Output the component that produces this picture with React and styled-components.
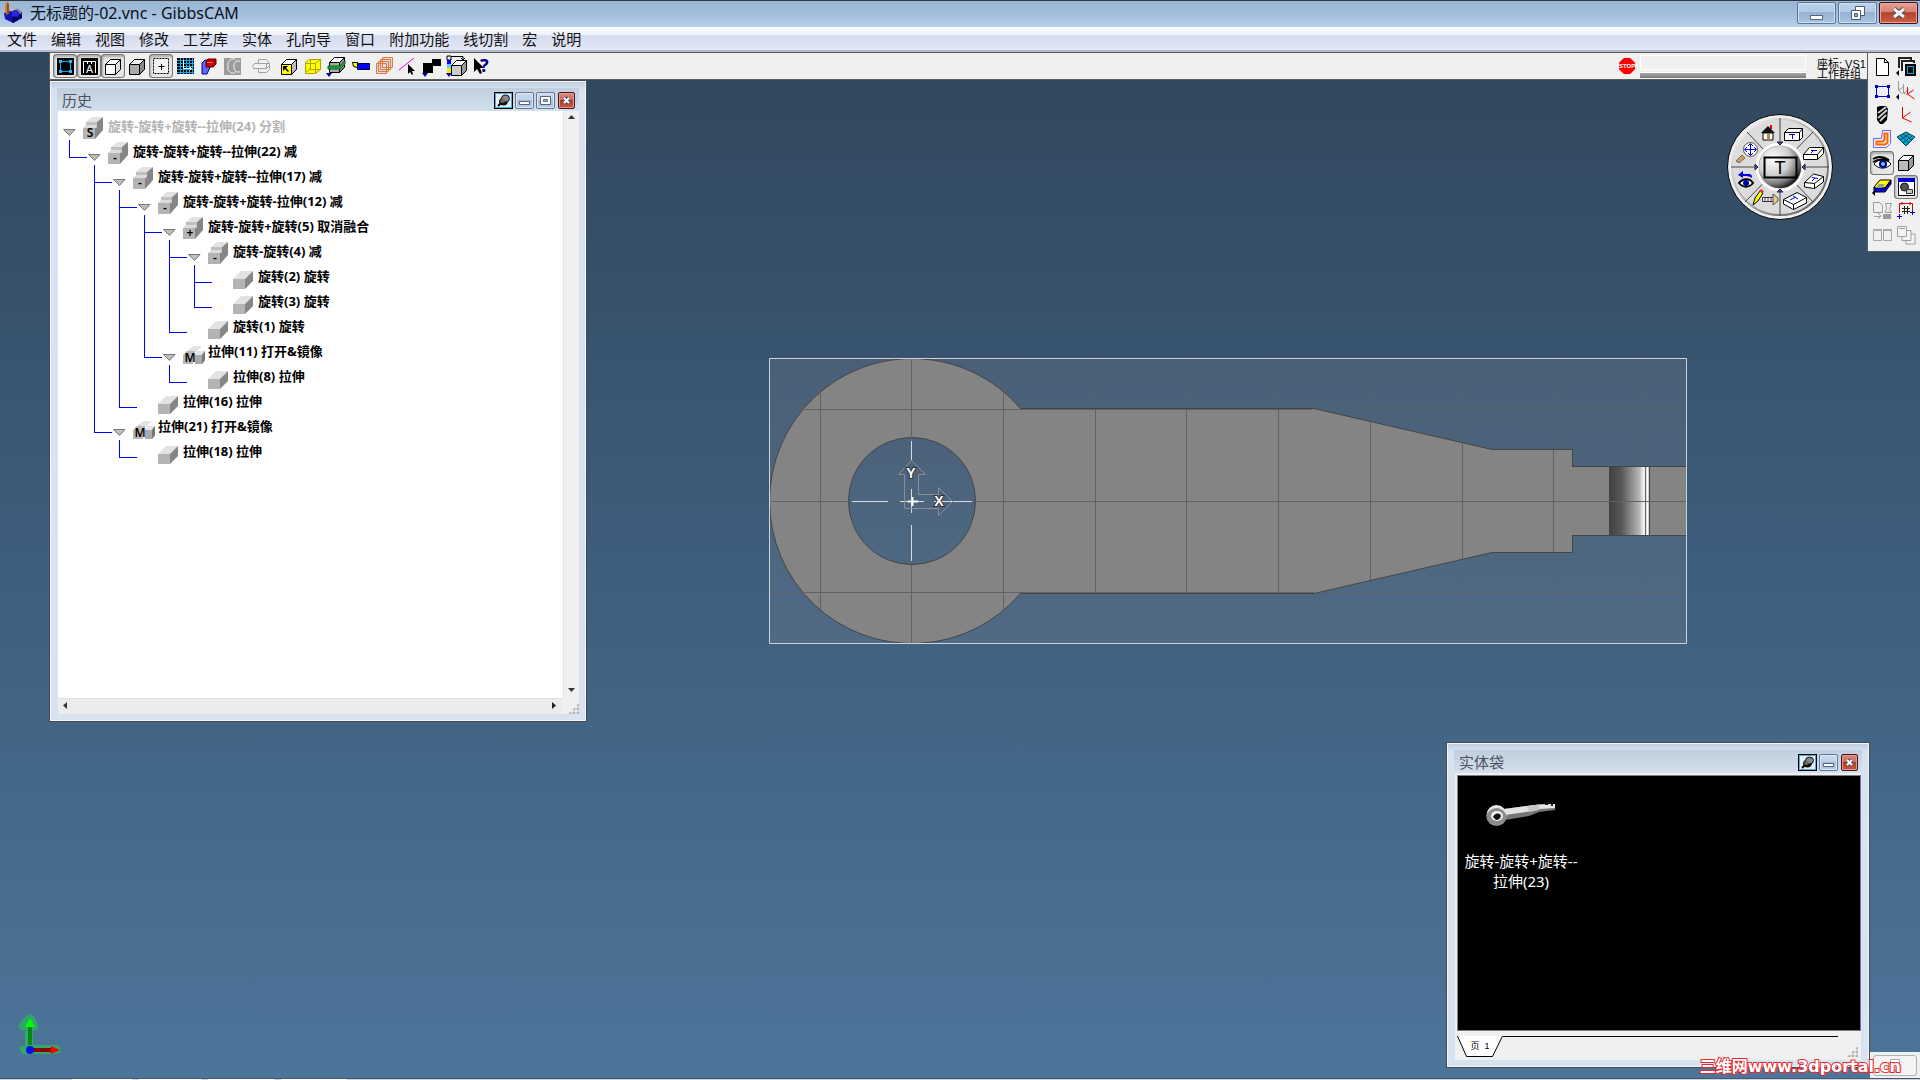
import React, { useState } from "react";
import styled, { createGlobalStyle } from "styled-components";

const menus = ["文件", "编辑", "视图", "修改", "工艺库", "实体", "孔向导", "窗口", "附加功能", "线切割", "宏", "说明"];

const history = {
  label: "旋转-旋转+旋转--拉伸(24) 分割", mark: "S", faded: true,
  children: [{
    label: "旋转-旋转+旋转--拉伸(22) 减", mark: "-",
    children: [
      {
        label: "旋转-旋转+旋转--拉伸(17) 减", mark: "-",
        children: [
          {
            label: "旋转-旋转+旋转-拉伸(12) 减", mark: "-",
            children: [
              {
                label: "旋转-旋转+旋转(5) 取消融合", mark: "+",
                children: [
                  {
                    label: "旋转-旋转(4) 减", mark: "-",
                    children: [{ label: "旋转(2) 旋转" }, { label: "旋转(3) 旋转" }],
                  },
                  { label: "旋转(1) 旋转" },
                ],
              },
              { label: "拉伸(11) 打开&镜像", mark: "M", children: [{ label: "拉伸(8) 拉伸" }] },
            ],
          },
          { label: "拉伸(16) 拉伸" },
        ],
      },
      { label: "拉伸(21) 打开&镜像", mark: "M", children: [{ label: "拉伸(18) 拉伸" }] },
    ],
  }],
};

const Cube = ({ x = 5, y = 5, front = "#fff", top = "#fff", side = "#ddd", line = "#000" }) => (
  <g stroke={line} fill={front} transform={`translate(${x} ${y})`}>
    <path d="M.5 5.5L5.5 .5H15.5L10.5 5.5Z" fill={top} />
    <path d="M10.5 5.5L15.5 .5V10.5L10.5 15.5Z" fill={side} />
    <path d="M.5 5.5H10.5V15.5H.5Z" />
  </g>
);

const DownMark = ({ x = 2 }) => <path d={`M${x} 19h6l-3 4z`} fill="#00a" />;
const LeftMark = () => <path d="M5 15v6l-3-3z" fill="#000" />;

const tools = [
  { name: "workgroup", on: true, art: <>
    <path d="M4 4h17v17H4z" /><path d="M7.500 7.500h10v10h-10z" fill="none" stroke="#00aeef" />
    <path d="M6 6h3v3H6zM16 6h3v3h-3zM6 16h3v3H6zM16 16h3v3h-3z" fill="#28b4ff" /></> },
  { name: "annotation", on: true, art: <>
    <path d="M4 4h17v17H4z" /><path d="M6.500 19V7.500h12V19M10.500 7v3M14.500 7v3" fill="none" stroke="#fff" />
    <text x="12.500" y="19" fontSize="11" fill="#fff" textAnchor="middle">A</text></> },
  { name: "solids", on: true, art: <Cube x={4} y={5} /> },
  { name: "sheets", art: <Cube x={4} y={5} front="#aaa" top="#f4f4f4" side="#888" /> },
  { name: "origin", on: true, art: <>
    <path d="M4.500 4.500h15v15h-15z" fill="#f4f4f4" stroke="#000" strokeDasharray="2 1" />
    <path d="M12.500 10v6M9.500 12.500h6" stroke="#000" /></> },
  { name: "grid", art: <>
    <path d="M4 4h17v16H4z" fill="#000" />
    <path d="M7.500 4v16M10.500 4v16M13.500 4v16M16.500 4v16M19.500 4v16M4 6.500h17M4 9.500h17M4 12.500h17M4 15.500h17M4 18.500h17" stroke="#19a6e8" />
    <path d="M10.500 6v8.500h8M16.500 12.500l2 2-2 2" fill="none" stroke="#fff" /></> },
  { name: "render", art: <>
    <path d="M5 9l3-3h5v7l-3 7H5z" fill="#6464ff" stroke="#00008c" />
    <path d="M9 8l2-3h8v5l-3 3H9z" fill="#c80000" stroke="#500" /><path d="M10 8.500h6" stroke="#f66" /></> },
  { name: "tool path", art: <>
    <path d="M3 4h17v17H3z" fill="#9c9c9c" />
    <path d="M19 7h-4l-2 3v5l2 3h4M14 5h-4l-3 4v7l3 3h4" fill="none" stroke="#eee" /></> },
  { name: "revolve", gap: true, art: <path d="M9.500 5.500h8l3 4v6l-3 3h-8v-4h-5l-1-2 2-3h4zM9.500 9.500h8v5h-8M17.500 9.500l3 0M17.500 14.500l3-3" fill="none" stroke="#a0a0a0" /> },
  { name: "select face", gap: true, art: <>
    <Cube x={4} y={5} front="#ff0" top="#fff" side="#bbb" />
    <path d="M6 12h5l-2 2 3 3-1 1-3-3-2 2z" /></> },
  { name: "wireframe", art: <>
    <path d="M4 9l5-4h11v10l-5 5H4z" fill="#ff0" />
    <path d="M4.500 9.500h10v10h-10zM9.500 5.500h10v10h-10zM4 9l5-4M15 9l5-4M15 19l5-4M4 19l5-4" fill="none" stroke="#aaa200" /></> },
  { name: "section", art: <>
    <Cube x={4} y={3} front="#aaa" top="#fff" side="#888" />
    <path d="M3 12h12l5-5v3l-5 5H3z" fill="#28a428" stroke="#063" /><DownMark x={1} /></> },
  { name: "tag", art: <>
    <path d="M3.500 8.500h5v5l-4-1z" fill="#ff0" stroke="#000" /><path d="M8.500 9.500h12v6h-12z" fill="#00f" stroke="#004" /></> },
  { name: "layers", art: <>
    <path d="M3 9l6-5h10v11l-5 5H3z" fill="#ddd" />
    <path d="M3.500 9.500h10v10h-10zM5.500 7.500h10v10h-10zM7.500 5.500h10v10h-10zM9.500 3.500h10v10h-10z" fill="none" stroke="#e07840" /></> },
  { name: "line snap", art: <>
    <path d="M2 16L17 4" stroke="#f0f" /><path d="M11 10v10l2-2 2 3 1-1-1-3h3z" /></> },
  { name: "blocks", art: <><path d="M2 9h10v10H2z" /><path d="M11 5h9v7h-9z" /><DownMark x={1} /></> },
  { name: "profile", art: <>
    <path d="M2 2h4v4H2z" fill="#eee" stroke="#000" /><path d="M2 6h4v4H2z" fill="#00f" /><path d="M2 10h4v4H2z" fill="#6cf" />
    <path d="M2 14h4v5H2z" fill="#ee0" /><path d="M6 2.500h12v3M16 4l2 2 2-2" fill="none" stroke="#000" />
    <Cube x={6} y={6} front="#ccc" top="#fff" side="#999" /><DownMark x={1} /></> },
  { name: "help", art: <>
    <path d="M5 4v14l3-3 3 5 2-1-2-5h4z" /><text x="11" y="18" fontSize="18" fontWeight="bold" fill="#00008b">?</text></> },
];

const palette = [
  { name: "new", art: <path d="M6.500 3.500h8l4 4v13h-12zM14.500 3.500v4h4" fill="#fff" stroke="#000" /> },
  { name: "workgroups", art: <>
    <path d="M5 13V3h12v2M8 16V6h12v2" fill="none" stroke="#222" strokeWidth="2" /><path d="M11 9h11v12H11z" />
    <path d="M13.500 11.500h6v7h-6z" fill="none" stroke="#00b4f0" /><LeftMark /></> },
  { name: "geometry", art: <>
    <path d="M6.500 7.500h12v10h-12z" fill="none" stroke="#00f" />
    <path d="M5 6h3v3H5zM17 6h3v3h-3zM5 16h3v3H5zM17 16h3v3h-3z" fill="#00c" /></> },
  { name: "coordinates", art: <>
    <path d="M4.500 2v9l5-3M4.500 11l4 4M9.500 5v9l5-3M9.500 14l4 2" fill="none" stroke="#999" />
    <path d="M13.500 8v7l6-4M13.500 15l7 5" fill="none" stroke="#e00" /><LeftMark /></> },
  { name: "tools", art: <>
    <path d="M7 4l3-1h6l2 3-1 11-4 4h-3l-3-4z" /><path d="M8 10l8-6M8 15l9-8M10 18l6-6" stroke="#ccc" strokeWidth="2" /></> },
  { name: "cs", art: <path d="M8.500 4v11l8-6M8.500 15l9 4" fill="none" stroke="#e00" /> },
  { name: "machining", art: <>
    <path d="M12.500 3.500h8v13l-4 4h-13v-9h8z" fill="none" stroke="#66f" />
    <path d="M14.500 6.500h3v9l-2 2h-9v-3h6l2-2z" fill="#ffe0c0" stroke="#f60" strokeWidth="2" /></> },
  { name: "surface", art: <>
    <path d="M3 10l9-5 9 5-9 9z" fill="#00a8d8" stroke="#045" />
    <path d="M6 8l9 8M9 7l9 6M6 13l9-6M9 16l9-7" stroke="#045" /></> },
  { name: "visibility", on: true, art: <>
    <path d="M4 13c4-5 12-6 17 0-4 5-12 6-17 0z" fill="#fff" stroke="#000" strokeWidth="1" />
    <circle cx="13" cy="13" r="4" fill="#00008c" /><circle cx="13" cy="13" r="2" fill="#6cf" />
    <path d="M3 8c5-3 10-3 16 1M3 11c5-3 11-3 16-1" fill="none" stroke="#000" strokeWidth="2" /></> },
  { name: "solid", art: <Cube x={4} y={4} front="#bbb" top="#fff" side="#999" /> },
  { name: "cut", art: <>
    <path d="M4 12l6-7h11l-6 8H4z" fill="#ff0" stroke="#000" /><path d="M4 13h11l6-8v4l-6 8H4z" fill="#00d" stroke="#000" />
    <path d="M9 9h6l-3 4H6z" fill="#999" /><LeftMark /></> },
  { name: "render view", on: true, art: <>
    <path d="M4.500 4.500h16v16h-16z" fill="#fff" stroke="#000" /><path d="M4 3h17v4H4z" fill="#00c" />
    <circle cx="10.500" cy="12" r="4" fill="#555" stroke="#111" /><path d="M12.500 14.500h6v4h-6z" fill="#ccc" stroke="#333" /></> },
  { name: "post", art: <>
    <path d="M3.500 3.500h6l3 3v7h-9zM15.500 4.500h6l-2 6 2 3h-6l1-4zM4 17.500h7M8 14l3 3-3 3" fill="none" stroke="#9a9a9a" />
    <path d="M13 15h8v5h-8z" fill="#999" /></> },
  { name: "dimension", art: <>
    <path d="M5.500 14V4.500h13V12M8 3v3M16 3v3" fill="none" stroke="#d00" />
    <path d="M8 9.500h8M8 12.500h8M10.500 7v8M13.500 7v8" stroke="#222" /><path d="M3 17.500h5M5.500 15v5M16 13.500h5M18.500 11v5" stroke="#00c" /></> },
  { name: "split", art: <path d="M3.500 7.500h8v10h-8zM13.500 7.500h8v10h-8zM3 6.500h9M13 6.500h9" fill="none" stroke="#a8a8a8" /> },
  { name: "cascade", art: <path d="M3.500 3.500h9v10h-9zM8 13.500v4h9v-10h-4M12 17v4h9v-10h-4M5 5.500h6" fill="#f4f4f4" stroke="#a0a0a0" /> },
];

const Icon = ({ size = 24, children }) => (
  <svg width={size} height={size} viewBox="0 0 24 24" aria-hidden="true">{children}</svg>
);

const SolidIcon = ({ mark }) => {
  const block = (x, y) => (
    <g transform={`translate(${x} ${y})`}>
      <path d="M0 8L8 0H20L12 8Z" fill="#e2e2e2" />
      <path d="M12 8L20 0V10L12 18Z" fill="#868686" />
      <path d="M0 8H12V18H0Z" fill="#b4b4b4" />
    </g>
  );
  return (
    <svg width="22" height="22" viewBox="0 0 22 22" aria-hidden="true">
      {!mark && block(0, 4)}
      {mark && mark !== "M" && (
        <>
          <path d="M3 5L9 0H20L14 5Z" fill="#e2e2e2" />
          <path d="M3 5H14V11H3Z" fill="#c0c0c0" />
          <path d="M14 5L20 0V13L12 22V11H14Z" fill="#868686" />
          <path d="M0 11L3 8H14L12 11Z" fill="#dcdcdc" />
          <path d="M0 11H12V22H0Z" fill="#b4b4b4" />
        </>
      )}
      {mark === "M" && (
        <>
          <path d="M5 8L11 4H19L14 9H5Z" fill="#e2e2e2" />
          <path d="M0 13L4 9H13L10 13V22H0Z" fill="#b8b8b8" />
          <path d="M12 13L15 9H22V18L19 22H12Z" fill="#aaa" />
          <path d="M12 13L15 9H22L19 13Z" fill="#e4e4e4" />
          <path d="M19 13L22 9V18L19 22Z" fill="#777" />
        </>
      )}
      {mark && <MarkText x="7" y="20">{mark}</MarkText>}
    </svg>
  );
};

const TreeNode = ({ node }) => {
  const [open, setOpen] = useState(true);
  return (
    <Branch>
      <NodeRow>
        <Toggle aria-label="toggle" disabled={!node.children} onClick={() => setOpen(!open)}>
          {node.children && (
            <svg width="13" height="7" viewBox="0 0 13 7" aria-hidden="true">
              <path d="M.5 .5H12L6.500 6.500Z" fill="#bdbdbd" stroke="#777" />
            </svg>
          )}
        </Toggle>
        <SolidIcon mark={node.mark} />
        <NodeLabel $faded={node.faded}>{node.label}</NodeLabel>
      </NodeRow>
      {open && node.children && (
        <SubTree>
          {node.children.map((child) => <TreeNode key={child.label} node={child} />)}
        </SubTree>
      )}
    </Branch>
  );
};

const PanelButtons = ({ max }) => (
  <Controls>
    <PanelButton $pin aria-label="pin">
      <svg width="15" height="13" viewBox="0 0 15 13">
        <path d="M2 12l3-3" stroke="#000" strokeWidth="2" />
        <ellipse cx="7.500" cy="7.500" rx="4.500" ry="4" fill="#111" />
        <ellipse cx="9.500" cy="4.500" rx="4" ry="3.500" fill="#888" stroke="#111" />
        <ellipse cx="6.500" cy="7" rx="2.500" ry="2" fill="#666" />
      </svg>
    </PanelButton>
    <PanelButton aria-label="minimize">
      <svg width="13" height="11" viewBox="0 0 13 11"><path d="M1.500 6.500h10v3h-10z" fill="#fff" stroke="#55657c" /></svg>
    </PanelButton>
    {max && (
      <PanelButton aria-label="maximize">
        <svg width="13" height="11" viewBox="0 0 13 11"><path d="M1.500 1.500h10v8h-10z" fill="#fff" stroke="#55657c" /><path d="M4.500 4.500h4v2h-4z" fill="#a5c4e8" stroke="#55657c" /></svg>
      </PanelButton>
    )}
    <PanelButton $close aria-label="close">
      <svg width="9" height="9" viewBox="0 0 9 9"><path d="M2 2l5 5M7 2l-5 5" stroke="#4a5570" strokeWidth="4" /><path d="M2 2l5 5M7 2l-5 5" stroke="#fff" strokeWidth="2" /></svg>
    </PanelButton>
  </Controls>
);

const Part = () => (
  <PartView viewBox="768 356 920 290" aria-hidden="true">
    <defs>
      <linearGradient id="bore">
        <stop offset="0" stopColor="#404040" />
        <stop offset=".3" stopColor="#585858" />
        <stop offset=".55" stopColor="#8c8c8c" />
        <stop offset=".75" stopColor="#b8b8b8" />
        <stop offset=".86" stopColor="#f4f4f4" />
        <stop offset="1" stopColor="#c8c8c8" />
      </linearGradient>
    </defs>
    <path d="M769 358h918v286h-918z" fill="#b0a0a0" fillOpacity=".15" />
    <g stroke="#5c6368">
      <path d="M820.500 359v284M911.500 359v284M1003.500 359v284M1095.500 359v284M1187.500 359v284M1278.500 359v284M1370.500 359v284M1462.500 359v284M1553.500 359v284M1645.500 359v284" strokeOpacity=".4" />
      <path d="M769 409.500h917M769 501.500h917M769 592.500h917" strokeOpacity=".7" />
    </g>
    <path
      d="M1020.500 408.500H1314L1492 449.500H1572.500V466.500H1686.500V535.500H1572.500V552.500H1492L1314 593.500H1020.500A142.500 142.500 0 1 1 1020.500 408.500ZM912 437.500A63.500 63.500 0 1 0 912 564.500A63.500 63.500 0 1 0 912 437.500Z"
      fill="#848484" stroke="#454545" fillRule="evenodd"
    />
    <path d="M1609.500 466.500h40v69h-40z" fill="url(#bore)" stroke="#454545" />
    <path d="M1647.500 467v68" stroke="#fff" />
    <g stroke="#626262">
      <path d="M820.500 393V609M911.500 359v79M911.500 565v78M1003.500 392V609M1095.500 409v184M1186.500 409v184M1278.500 409v184M1370.500 422v158M1462.500 443v116M1553.500 450v102M1645.500 467v68" />
      <path d="M802 409.500h510M770 501.500h79M975 501.500h711M802 592.500h512" />
    </g>
    <path d="M769.500 358.500h917v285h-917z" fill="none" stroke="#cfd3d6" />
    <path d="M911.500 441v19M911.500 489v24M911.500 525v36M852 501.500h36M900 501.500h24M934 501.500h38" stroke="#d8dce0" />
    <path d="M904.500 508.500V474.500H898.500L911.500 460.500L925.500 474.500H918.500V494.500H938.500V487.500L952.500 501.500L938.500 515.500V508.500Z" fill="none" stroke="#8d8d8d" />
    <path d="M912.500 497v9M908 501.500h10" stroke="#fff" strokeWidth="2" />
    <AxisText x="911" y="478">Y</AxisText>
    <AxisText x="939" y="506">X</AxisText>
  </PartView>
);

const TBox = ({ x, y, tilt }) => (
  <g transform={`translate(${x} ${y})`} fill="#fff" stroke="#000">
    {tilt === 0 && <><path d="M.500 4.500L4.500 .500H18.500V9.500L15.500 12.500H.500Z" /><path d="M.500 4.500H15.500V12.500M15.500 4.500L18.500 .500" /><path d="M5 6.500h6M8.500 6v5" stroke="#00f" /></>}
    {tilt === 1 && <><path d="M.500 7.500L6.500 .500H20.500V6.500L14.500 12.500H.500Z" /><path d="M.500 7.500H14.500V12.500M14.500 7.500L20.500 .500" /><path d="M8 3.500h6M11 3l-3 3" stroke="#00f" /></>}
    {tilt === 2 && <><path d="M.500 8.500L9.500 0L19.500 2.500V8L10.500 14.500L.500 13Z" /><path d="M.500 8.500L10.500 9.500V14.500M10.500 9.500L19.500 2.500" /><path d="M8 3.500l6 1M11 4l-3 3" stroke="#00f" /></>}
    {tilt === 3 && <><path d="M.500 7.500L14 .500L23.500 5.500V11L10.500 17.500L.500 12Z" /><path d="M.500 7.500L10.500 12.500V17.500M10.500 12.500L23.500 5.500" /><path d="M10 4l5 3M13 5l-6 3" stroke="#00f" /></>}
  </g>
);

const ViewWheel = () => (
  <Wheel viewBox="0 0 106 106" aria-hidden="true">
    <defs>
      <radialGradient id="ball" cx=".33" cy=".3" r=".78">
        <stop offset="0" stopColor="#fff" />
        <stop offset=".5" stopColor="#d0d0d0" />
        <stop offset=".78" stopColor="#777" />
        <stop offset="1" stopColor="#000" />
      </radialGradient>
      <linearGradient id="rim" x1="0" y1="0" x2="1" y2="1">
        <stop offset="0" stopColor="#fff" />
        <stop offset="1" stopColor="#555" />
      </linearGradient>
    </defs>
    <circle cx="53" cy="53" r="52.500" fill="#eee" stroke="#000" />
    <circle cx="53" cy="53" r="48" fill="#dcdcdc" stroke="url(#rim)" strokeWidth="2" />
    <path d="M53 4v98M4 53h98M20 18l66 70M86 18L18 88" stroke="#444" strokeWidth="1" />
    <circle cx="53" cy="53" r="25" fill="#dcdcdc" />
    <circle cx="53" cy="53" r="23" fill="#999" stroke="#fff" strokeWidth="3" />
    <circle cx="53" cy="53" r="21" fill="url(#ball)" />
    <g fill="#4848b8" stroke="#224">
      <path d="M50 28h6l-3 3zM50 78h6l-3-3zM28 50v6l3-3zM78 50v6l-3-3z" />
    </g>
    <path d="M37.500 43.500h32v20h-32z" fill="none" stroke="#000" strokeWidth="2" />
    <text x="53" y="60" fontFamily="Liberation Sans, sans-serif" fontSize="18" textAnchor="middle">T</text>
    <path d="M34 19l7-7 7 7z" fill="#111" /><path d="M36 19h10v7H36z" fill="#fff" stroke="#000" /><path d="M40 20h3v6h-3z" fill="#b08850" /><path d="M43 11h2v4h-2z" fill="#e00" />
    <TBox x={57} y={14} tilt={0} />
    <TBox x={76} y={33} tilt={1} />
    <TBox x={77} y={60} tilt={2} />
    <TBox x={56} y={78} tilt={3} />
    <circle cx="23.500" cy="35.500" r="7" fill="#fff" stroke="#555" />
    <path d="M23.500 30v11M18 35.500h11M21 32l2.500-2.500 2.500 2.500M21 39l2.500 2.500 2.500-2.500M20 33l-2.500 2.500 2.500 2.500M27 33l2.500 2.500-2.500 2.500" fill="none" stroke="#00d" />
    <path d="M9 47l6-6 3 3-6 5z" fill="#c8a060" stroke="#765" />
    <path d="M11 61l5-4v3h5c4 0 4 2 4 4-3-2-5-2-9-2v2z" fill="#00d" />
    <path d="M12 69c4-5 11-5 14 0-4 5-10 5-14 0z" fill="#fff" stroke="#000" strokeWidth="2" /><circle cx="19" cy="69" r="3" fill="#00a" />
    <path d="M26 91l2-7 5-7 3 2-5 8z" fill="#ff0" stroke="#000" /><path d="M32 77l2-2 3 2-2 2z" fill="#e33" />
    <path d="M35.500 83.500h11v4h-11zM38 83v4M41 83v4M44 83v4" fill="#fff" stroke="#333" /><path d="M46 80v11l5-4v-3z" fill="#e8c890" stroke="#555" />
  </Wheel>
);

const App = () => (
  <Page>
    <GlobalStyle />
    <TitleBar>
      <svg width="20" height="24" viewBox="0 0 20 24" aria-hidden="true">
        <path d="M1 12l4-2 14 1v6l-9 5-8-4z" fill="#1414b4" /><path d="M9 16l10-4v5l-9 5z" fill="#00006e" />
        <path d="M9 12c1-5 7-6 9 0l-4 4-5-1z" fill="#2828dc" /><path d="M8 10c3-3 8-2 10 3" fill="none" stroke="#e6c83c" strokeWidth="1" />
        <path d="M2 3l2-2 2 2v9l-2 2-2-3z" fill="#dc7d28" /><path d="M4 1l2 2v9l-2 2z" fill="#96501e" />
      </svg>
      <AppTitle>无标题的-02.vnc - GibbsCAM</AppTitle>
      <CaptionButton aria-label="minimize window">
        <svg width="15" height="16" viewBox="0 0 15 16"><path d="M1.500 10.500h12v4h-12z" fill="#fff" stroke="#55657c" /></svg>
      </CaptionButton>
      <CaptionButton aria-label="restore window">
        <svg width="16" height="16" viewBox="0 0 16 16"><path d="M5.500 1.500h9v9h-9z" fill="#fff" stroke="#4f5c70" /><path d="M1.500 5.500h9v9h-9z" fill="#fff" stroke="#4f5c70" /><path d="M4.500 8.500h3v3h-3z" fill="#8fb0d8" stroke="#4f5c70" /></svg>
      </CaptionButton>
      <CaptionButton $close aria-label="close window">
        <svg width="14" height="14" viewBox="0 0 14 14"><path d="M2 3l10 8M12 3L2 11" stroke="#4a4a5c" strokeWidth="5" /><path d="M2 3l10 8M12 3L2 11" stroke="#f4f4f4" strokeWidth="3" /></svg>
      </CaptionButton>
    </TitleBar>
    <MenuBar>
      {menus.map((menu) => <MenuItem key={menu}>{menu}</MenuItem>)}
    </MenuBar>

    <Workspace>
      <Main>
        <Toolbar>
          {tools.map((tool) => (
            <ToolButton key={tool.name} aria-label={tool.name} $on={tool.on} $gap={tool.gap}>
              <Icon>{tool.art}</Icon>
            </ToolButton>
          ))}
          <Spacer />
          <StopButton aria-label="stop">STOP</StopButton>
          <Progress>
            <ProgressText />
            <ProgressTrack />
          </Progress>
          <Coords>
            <div>座标: VS1</div>
            <div>工作群组</div>
          </Coords>
        </Toolbar>
      </Main>
      <Palette>
        {palette.map((tool) => (
          <ToolButton key={tool.name} aria-label={tool.name} $on={tool.on}>
            <Icon>{tool.art}</Icon>
          </ToolButton>
        ))}
      </Palette>

      <Part />
      <ViewWheel />

      <HistoryWindow>
        <PanelHead>
          <PanelTitle>历史</PanelTitle>
          <PanelButtons max />
        </PanelHead>
        <HistoryBody>
          <Tree>
            <TreeNode node={history} />
          </Tree>
          <ScrollColumn>
            <ScrollArrow aria-label="scroll up"><svg width="7" height="4" viewBox="0 0 7 4"><path d="M0 4L3.500 0L7 4Z" fill="#333" /></svg></ScrollArrow>
            <ScrollArrow aria-label="scroll down"><svg width="7" height="4" viewBox="0 0 7 4"><path d="M0 0L3.500 4L7 0Z" fill="#333" /></svg></ScrollArrow>
          </ScrollColumn>
          <ScrollRow>
            <ScrollArrow aria-label="scroll left"><svg width="4" height="7" viewBox="0 0 4 7"><path d="M4 0L0 3.500L4 7Z" fill="#333" /></svg></ScrollArrow>
            <ScrollArrow aria-label="scroll right"><svg width="4" height="7" viewBox="0 0 4 7"><path d="M0 0L4 3.500L0 7Z" fill="#222" /></svg></ScrollArrow>
          </ScrollRow>
          <Corner><Grip /></Corner>
        </HistoryBody>
      </HistoryWindow>

      <BagWindow>
        <PanelHead>
          <PanelTitle>实体袋</PanelTitle>
          <PanelButtons />
        </PanelHead>
        <BagBody>
          <BagScreen>
            <BagItem>
              <svg width="72" height="26" viewBox="0 0 72 26" aria-hidden="true">
                <path d="M18 6L42 3L54 1.500L70 1V7L54 9L44 13L20 17Z" fill="#777" />
                <path d="M19 6L41 3L54 1.500L70 1L70 5L55 6L41 9L20 12Z" fill="#e4e4e4" />
                <path d="M42 3L54 1.500L54 7L44 9Z" fill="#c8c8c8" />
                <path d="M60 1h3v1h-3zM66 1h2v2h-2z" fill="#222" />
                <circle cx="11.500" cy="12" r="10" fill="#e8e8e8" />
                <ellipse cx="11.500" cy="14" rx="10" ry="9" fill="#8c8c8c" />
                <ellipse cx="12" cy="13" rx="6" ry="5" fill="#f0f0f0" />
                <path d="M8 14c1-4 7-5 8-1-1 3-3 4-5 4z" fill="#111" />
              </svg>
              <BagLabel>旋转-旋转+旋转--拉伸(23)</BagLabel>
            </BagItem>
          </BagScreen>
          <BagFoot>
            <PageTab>
              <svg width="46" height="21" viewBox="0 0 46 21" aria-hidden="true">
                <path d="M.500 0L9.500 20.500H35.500L45.500 0" fill="#fff" stroke="#000" />
              </svg>
              <span>页&nbsp; 1</span>
            </PageTab>
            <FootLine />
            <Grip />
          </BagFoot>
        </BagBody>
      </BagWindow>

      <AxisMark viewBox="0 0 50 42" aria-hidden="true">
        <path d="M10 40a5 5 0 0 1-5-8h4V16H5q-5-2 0-8l6-7q4-2 7 1l4 9q2 5-3 5h-2v15h24q8 5 0 9z" fill="#20c850" fillOpacity=".6" />
        <path d="M9 13l5-9 5 9z" fill="#0f0" /><path d="M12 13h4v18h-4z" fill="#008a10" />
        <path d="M16 34h20v4H16z" fill="#8c0000" /><path d="M35 32l9 4-9 4z" fill="#f00" />
        <circle cx="14" cy="36" r="4" fill="#0010e0" />
      </AxisMark>

      <Dock>
        <DockButton aria-label="keyboard">
          <svg width="16" height="14" viewBox="0 0 16 14"><path d="M3.500 .500h9v11h-9z" fill="#fff" stroke="#aaa" /><path d="M1 5.500h13v7H1zM3 8.500h10M3 10.500h10" fill="none" stroke="#b0b0b0" /></svg>
        </DockButton>
      </Dock>
      <Watermark href="#portal">三维网www.3dportal.cn</Watermark>
    </Workspace>

    <Taskbar>
      <Task $wide={60} /><Task $wide={62} /><Task $wide={66} /><Task $wide={66} />
    </Taskbar>
  </Page>
);

export default App;

const GlobalStyle = createGlobalStyle`
  * {
    box-sizing: border-box;
  }
  body {
    margin: 0;
    font-family: 'Noto Sans', 'Noto Sans CJK SC', sans-serif;
    font-size: 15px;
  }
  button {
    padding: 0;
    border: 0;
    background: none;
    font: inherit;
    color: inherit;
  }
  ul {
    margin: 0;
    padding: 0;
    list-style: none;
  }
  svg {
    display: block;
    flex: none;
  }
`;

const Page = styled.div`
  display: flex;
  flex-direction: column;
  min-height: 100vh;
  background: #4c7398;
`;

const TitleBar = styled.header`
  display: flex;
  align-items: center;
  gap: 2px;
  height: 27px;
  padding: 0 2px 2px 3px;
  border-top: 1px solid #33373d;
  background: linear-gradient(#9ab4d3, #a4bfdd 50%, #b7cfe8);
`;

const AppTitle = styled.h1`
  flex: 1;
  margin: 0;
  padding-left: 5px;
  font-size: 16px;
  font-weight: 400;
  line-height: 24px;
  color: #0c1118;
`;

const CaptionButton = styled.button`
  display: flex;
  align-items: center;
  justify-content: center;
  width: 39px;
  height: 22px;
  border: 1px solid ${({ $close }) => ($close ? "#4a1020" : "#5b7598")};
  border-radius: 2px;
  box-shadow: inset 0 0 0 1px ${({ $close }) => ($close ? "#e6a79a" : "#cfe0f3")};
  background: ${({ $close }) =>
    $close
      ? "linear-gradient(#e5a094, #d77f70 45%, #b8412c 48%, #c85f42)"
      : "linear-gradient(#bfd3ea, #b0c8e4 45%, #94b1d3 48%, #a9c5e2)"};
`;

const MenuBar = styled.nav`
  display: flex;
  height: 25px;
  border-bottom: 2px solid #b6bacb;
  background: linear-gradient(#fff, #eef1f9 34%, #d5dbee 38%, #e3e7f5);
`;

const MenuItem = styled.button`
  padding: 0 7px;
  line-height: 24px;
  color: #111;
`;

const Workspace = styled.main`
  position: relative;
  display: flex;
  align-items: flex-start;
  flex: 1;
  min-height: 760px;
  background: linear-gradient(#31465c, #3f6080 55%, #4d759a);
`;

const Main = styled.div`
  flex: 1;
  min-width: 0;
  padding-left: 49px;
`;

const Toolbar = styled.div`
  display: flex;
  align-items: center;
  height: 28px;
  padding-left: 3px;
  border: 1px solid #5d5d5d;
  border-right: 0;
  background: #f0f0f0;
`;

const ToolButton = styled.button`
  display: flex;
  align-items: center;
  justify-content: center;
  flex: none;
  width: 24px;
  height: 24px;
  margin-left: ${({ $gap }) => ($gap ? "4px" : "0")};
  border-radius: 4px;
  background: ${({ $on }) => ($on ? "#e6e6e6" : "transparent")};
  box-shadow: ${({ $on }) => ($on ? "inset 0 0 0 1px #777, inset 1px 2px 2px 1px #b0b0b0" : "none")};
`;

const Spacer = styled.div`
  flex: 1;
`;

const StopButton = styled.button`
  flex: none;
  width: 16px;
  height: 16px;
  clip-path: polygon(30% 0, 70% 0, 100% 30%, 100% 70%, 70% 100%, 30% 100%, 0 70%, 0 30%);
  background: #f00;
  color: #fff;
  font-family: 'Liberation Sans', sans-serif;
  font-size: 6px;
  font-weight: 700;
  line-height: 16px;
  text-align: center;
`;

const Progress = styled.div`
  width: 166px;
  margin-left: 5px;
`;

const ProgressText = styled.div`
  height: 15px;
  border: 1px solid #fff;
`;

const ProgressTrack = styled.div`
  height: 6px;
  margin-top: 2px;
  border-top: 1px solid #fff;
  background: linear-gradient(#aaa, #777);
`;

const Coords = styled.div`
  align-self: flex-start;
  width: 50px;
  margin-left: 11px;
  padding-top: 6px;
  font-family: 'Liberation Sans', 'Noto Sans CJK SC', sans-serif;
  font-size: 11px;
  line-height: 10px;
  white-space: nowrap;
`;

const Palette = styled.div`
  display: grid;
  grid-template-columns: 24px 24px;
  width: 53px;
  padding: 2px 2px 4px;
  border: 1px solid #5d5d5d;
  border-right: 0;
  background: #f0f0f0;
`;

const PartView = styled.svg`
  position: absolute;
  top: 304px;
  left: 40%;
  width: 920px;
  height: 290px;
`;

const AxisText = styled.text`
  font-family: 'Liberation Sans', sans-serif;
  font-size: 14px;
  font-weight: 700;
  text-anchor: middle;
  fill: #fff;
  stroke: #333;
  stroke-width: 2px;
  paint-order: stroke;
`;

const MarkText = styled.text`
  font-size: 12px;
  font-weight: 600;
  text-anchor: middle;
`;

const Wheel = styled.svg`
  position: absolute;
  top: 62px;
  right: 87px;
  width: 106px;
  height: 106px;
`;

const FloatingWindow = styled.section`
  position: absolute;
  display: flex;
  flex-direction: column;
  padding: 7px;
  border: 1px solid #474a50;
  background: linear-gradient(#bccbe0, #d7e3f1 8px);
  box-shadow: inset 0 0 0 1px #f3f7fc;
`;

const HistoryWindow = styled(FloatingWindow)`
  top: 28px;
  left: 49px;
  width: 538px;
  height: 642px;
`;

const BagWindow = styled(FloatingWindow)`
  right: 50px;
  bottom: 10px;
  width: 424px;
  height: 326px;
`;

const PanelHead = styled.header`
  display: flex;
  align-items: flex-end;
  justify-content: space-between;
  flex: none;
  height: 23px;
  padding: 0 4px 2px 5px;
  background: linear-gradient(#c1cfdd, #d3e0ee);
`;

const PanelTitle = styled.h2`
  margin: 0;
  font-size: 15px;
  font-weight: 400;
  line-height: 18px;
  color: #4b535e;
`;

const Controls = styled.div`
  display: flex;
  gap: 2px;
`;

const PanelButton = styled.button`
  display: flex;
  align-items: center;
  justify-content: center;
  width: ${({ $close }) => ($close ? "17px" : "19px")};
  height: 17px;
  margin-left: ${({ $close }) => ($close ? "1px" : "0")};
  border: 1px solid ${({ $close, $pin }) => ($close ? "#4f1020" : $pin ? "#000" : "#5f7896")};
  border-radius: ${({ $pin }) => ($pin ? "0" : "2px")};
  box-shadow: inset 0 0 0 1px ${({ $close, $pin }) => ($close ? "#dc9c90" : $pin ? "#5ba6d8" : "#dce8f6")};
  background: ${({ $close, $pin }) =>
    $close
      ? "linear-gradient(#d88a7c, #cd6e5c 45%, #b23c26 48%, #c45a40)"
      : $pin
        ? "#e4f0fa"
        : "linear-gradient(#ccdcee, #bdd0e8 45%, #a4bddb 48%, #b6cde6)"};
`;

const HistoryBody = styled.div`
  display: grid;
  grid-template-columns: 1fr 16px;
  grid-template-rows: 1fr 16px;
  flex: 1;
  min-height: 0;
  margin-left: 1px;
  background: #fff;
`;

const Branch = styled.li``;

const Tree = styled.ul`
  padding: 4px 0 0 5px;
  overflow: hidden;
`;

/* connector lines sit under the parent's arrow */
const SubTree = styled.ul`
  & > ${Branch} {
    padding-left: 25px;
    background:
      linear-gradient(#00f, #00f) 6px 0 / 1px 100% no-repeat,
      linear-gradient(#00f, #00f) 6px 17px / 18px 1px no-repeat;
  }
  & > ${Branch}:last-child {
    background:
      linear-gradient(#00f, #00f) 6px 0 / 1px 17px no-repeat,
      linear-gradient(#00f, #00f) 6px 17px / 18px 1px no-repeat;
  }
`;

const NodeRow = styled.div`
  display: flex;
  align-items: center;
  height: 25px;
`;

const Toggle = styled.button`
  align-self: flex-end;
  width: 20px;
  height: 12px;
  padding-bottom: 4px;
`;

const NodeLabel = styled.span`
  padding: 0 0 4px 3px;
  font-size: 13px;
  font-weight: 700;
  line-height: 18px;
  white-space: nowrap;
  color: ${({ $faded }) => ($faded ? "#b4b4b4" : "#000")};
`;

const ScrollColumn = styled.div`
  display: flex;
  flex-direction: column;
  justify-content: space-between;
  padding-bottom: 2px;
  border-left: 1px solid #e2e2e2;
  background: #f0f0f0;
`;

const ScrollRow = styled.div`
  display: flex;
  justify-content: space-between;
  padding-right: 2px;
  border-top: 1px solid #e0e0e0;
  background: #ececec;
`;

const ScrollArrow = styled.button`
  display: flex;
  align-items: center;
  justify-content: center;
  width: 14px;
  height: 12px;
`;

const Corner = styled.div`
  display: flex;
  align-items: flex-end;
  justify-content: flex-end;
  background: #f0f0f0;
`;

const Grip = styled.div`
  width: 11px;
  height: 11px;
  background: radial-gradient(#b4b4b4 1px, transparent 2px) 0 0 / 4px 4px;
  clip-path: polygon(100% 0, 100% 100%, 0 100%);
`;

const BagBody = styled.div`
  display: flex;
  flex-direction: column;
  flex: 1;
  min-height: 0;
  margin: 0 1px;
  padding: 2px 0 0 2px;
  background: #f0f0f0;
`;

const BagScreen = styled.div`
  flex: 1;
  border: 1px solid #7d7d88;
  background: #000;
`;

const BagItem = styled.figure`
  display: flex;
  flex-direction: column;
  align-items: center;
  gap: 22px;
  width: 126px;
  margin: 0;
  padding-top: 27px;
`;

const BagLabel = styled.figcaption`
  line-height: 20px;
  color: #fff;
  text-align: center;
`;

const BagFoot = styled.div`
  display: flex;
  align-items: flex-end;
  height: 29px;
  padding: 5px 3px 3px 0;
`;

const PageTab = styled.button`
  display: grid;
  height: 21px;
  font-family: 'Liberation Sans', 'Noto Sans CJK SC', sans-serif;
  font-size: 9px;
  line-height: 20px;
  & > * {
    grid-area: 1 / 1;
  }
`;

const FootLine = styled.div`
  flex: 1;
  align-self: flex-start;
  margin-right: 9px;
  border-top: 1px solid #000;
`;

const AxisMark = styled.svg`
  position: absolute;
  left: 16px;
  bottom: 22px;
  width: 50px;
  height: 42px;
`;

const Dock = styled.div`
  position: absolute;
  right: 0;
  bottom: 0;
  width: 50px;
  padding: 3px 3px 2px;
  background: #f0f0f0;
`;

const DockButton = styled.button`
  display: flex;
  align-items: center;
  justify-content: center;
  width: 44px;
  height: 21px;
  border: 1px solid #adb2b5;
  border-radius: 3px;
  background: #f4f4f4;
`;

const Watermark = styled.a`
  position: absolute;
  right: 19px;
  bottom: 1px;
  font-family: 'DejaVu Sans', 'Noto Sans CJK SC', sans-serif;
  font-size: 16px;
  font-weight: 700;
  line-height: 20px;
  color: #fff;
  text-decoration: none;
  -webkit-text-stroke: 2px #e8282c;
  paint-order: stroke;
`;

const Taskbar = styled.footer`
  display: flex;
  gap: 7px;
  height: 2px;
  padding-left: 72px;
  border-top: 1px solid #4a5866;
  background: #c6d2e2;
`;

const Task = styled.div`
  width: ${({ $wide }) => $wide}px;
  background: #fff;
`;
